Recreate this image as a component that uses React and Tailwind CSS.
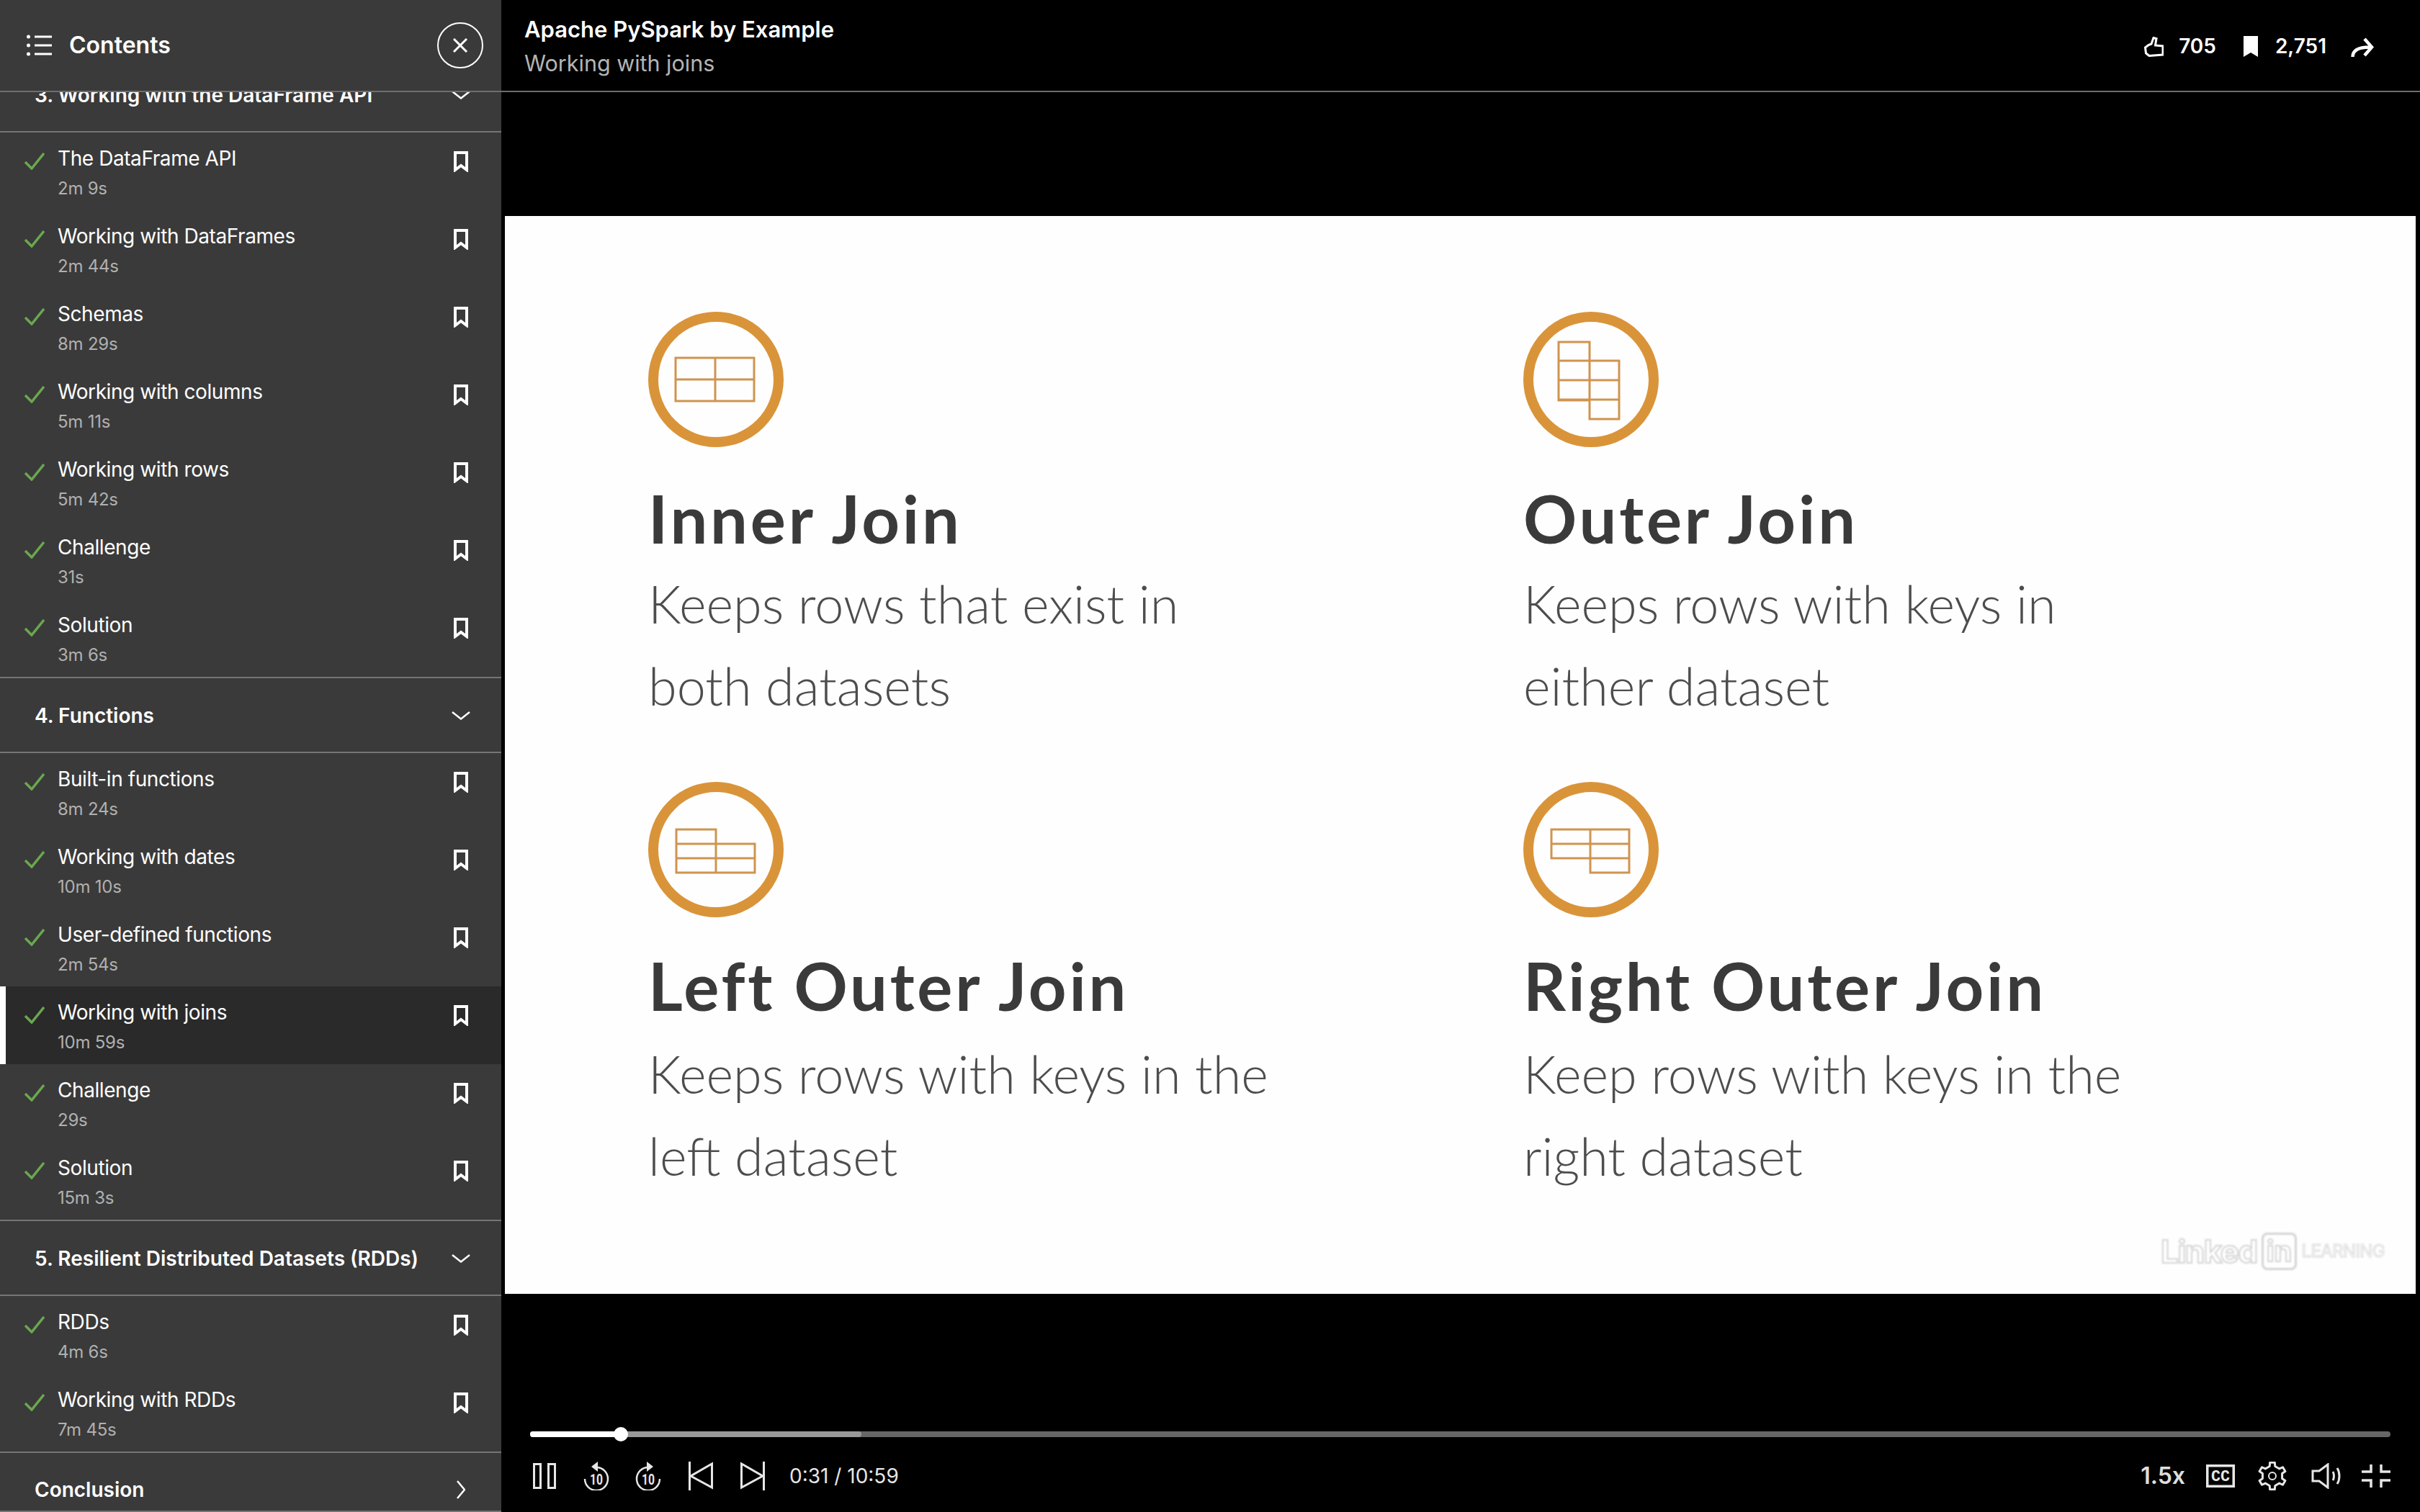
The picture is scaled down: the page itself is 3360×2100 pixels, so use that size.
import React from 'react';

const sections = [
  {
    title: '3. Working with the DataFrame API',
    items: [
      ['The DataFrame API', '2m 9s'],
      ['Working with DataFrames', '2m 44s'],
      ['Schemas', '8m 29s'],
      ['Working with columns', '5m 11s'],
      ['Working with rows', '5m 42s'],
      ['Challenge', '31s'],
      ['Solution', '3m 6s'],
    ],
  },
  {
    title: '4. Functions',
    items: [
      ['Built-in functions', '8m 24s'],
      ['Working with dates', '10m 10s'],
      ['User-defined functions', '2m 54s'],
      ['Working with joins', '10m 59s', true],
      ['Challenge', '29s'],
      ['Solution', '15m 3s'],
    ],
  },
  {
    title: '5. Resilient Distributed Datasets (RDDs)',
    items: [
      ['RDDs', '4m 6s'],
      ['Working with RDDs', '7m 45s'],
    ],
  },
];

// table drawings inside the orange circles, in the circle's own 188 box
const tables = {
  inner: 'M38 64H147V124H38ZM93 64V124M38 94H147',
  outer: 'M49 42H92V123H49ZM49 68H133V149H92V68M49 95H133M49 122H133',
  left: 'M39 66H94V126H39ZM94 86H148V126H94M39 86H94M39 106H148',
  right: 'M39 66H147V126H93V106H39ZM93 66V106M39 86H147M93 106H147',
};

const joins = [
  { name: 'Inner Join', lines: ['Keeps rows that exist in', 'both datasets'], table: 'inner', gap: 'mt-[44px]', descGap: 'mt-[6px]' },
  { name: 'Outer Join', lines: ['Keeps rows with keys in', 'either dataset'], table: 'outer', gap: 'mt-[44px]', descGap: 'mt-[6px]' },
  { name: 'Left Outer Join', lines: ['Keeps rows with keys in the', 'left dataset'], table: 'left', gap: 'mt-[40px]', descGap: 'mt-[10px]' },
  { name: 'Right Outer Join', lines: ['Keep rows with keys in the', 'right dataset'], table: 'right', gap: 'mt-[40px]', descGap: 'mt-[10px]' },
];

function gearPath(cx, cy, outer, inner, teeth) {
  const step = (Math.PI * 2) / teeth;
  const pts = [];
  for (let i = 0; i < teeth; i++) {
    const a = i * step - Math.PI / 2;
    const w = step * 0.17;
    pts.push([a - w * 1.55, inner], [a - w, outer], [a + w, outer], [a + w * 1.55, inner]);
  }
  return (
    pts
      .map(([a, r], i) => `${i ? 'L' : 'M'}${(cx + r * Math.cos(a)).toFixed(2)} ${(cy + r * Math.sin(a)).toFixed(2)}`)
      .join('') + 'Z'
  );
}

function Check() {
  return (
    <svg width="28" height="24" viewBox="0 0 28 24" fill="none" className="mt-[28px] ml-[34px] shrink-0">
      <path d="M1 13L10 22L27 1" stroke="#6aa84f" strokeWidth="3.500" />
    </svg>
  );
}

function Bookmark() {
  return (
    <svg width="20" height="29" viewBox="0 0 20 29" fill="none" className="mt-[26px] mr-[46px] shrink-0">
      <path d="M2 2H18V26L10 20L2 26Z" stroke="white" strokeWidth="4" />
    </svg>
  );
}

function Lesson({ title, time, active }) {
  return (
    <div className={`relative flex h-[108px] ${active ? 'bg-[#2a2a2a]' : ''}`}>
      {active && <div className="absolute left-0 top-0 h-full w-2 bg-white" />}
      <Check />
      <div className="ml-[18px] flex-1 pt-4">
        <div className="text-[28px] leading-10 tracking-[-0.015em] text-white">{title}</div>
        <div className="mt-1.5 text-2xl leading-8 tracking-[-0.01em] text-[#b0b0b0]">{time}</div>
      </div>
      <Bookmark />
    </div>
  );
}

function SectionRow({ title }) {
  return (
    <div className="flex h-[104px] items-center justify-between border-b-2 border-[#757575] pl-[48px] pr-[43px] pt-0.5">
      <span className="text-[28px] font-semibold text-white">{title}</span>
      <svg width="26" height="12" viewBox="0 0 26 12" fill="none">
        <path d="M1 1L13 10.500L25 1" stroke="white" strokeWidth="2.500" />
      </svg>
    </div>
  );
}

function Sidebar() {
  return (
    <div className="flex h-full w-[696px] shrink-0 flex-col overflow-hidden bg-[#3a3a3a]">
      <div className="relative z-10 flex h-[128px] shrink-0 items-center justify-between border-b-2 border-[#6e6e6e] bg-[#3a3a3a] pl-[37px] pr-[25px]">
        <div className="flex items-center gap-6">
          <svg width="35" height="30" viewBox="0 0 35 30" fill="none">
            <path d="M11 3H35M11 15H35M11 27H35" stroke="white" strokeWidth="3" />
            <circle cx="2.500" cy="3" r="2.500" fill="white" />
            <circle cx="2.500" cy="15" r="2.500" fill="white" />
            <circle cx="2.500" cy="27" r="2.500" fill="white" />
          </svg>
          <span className="text-[32px] font-semibold text-white">Contents</span>
        </div>
        <div className="flex h-[64px] w-[64px] items-center justify-center rounded-full border-2 border-white">
          <svg width="20" height="20" viewBox="0 0 20 20" fill="none">
            <path d="M1 1L19 19M19 1L1 19" stroke="white" strokeWidth="3" />
          </svg>
        </div>
      </div>
      {/* list is scrolled, section 3 sits partly under the header */}
      <div className="mt-[-48px]">
        {sections.map((s) => (
          <div key={s.title}>
            <SectionRow title={s.title} />
            {s.items.map(([t, d, active]) => (
              <Lesson key={t} title={t} time={d} active={active} />
            ))}
            <div className="h-0.5 bg-[#757575]" />
          </div>
        ))}
        <div className="flex h-[82px] items-center justify-between border-b-2 border-[#757575] pl-[48px] pr-[50px] pt-[22px]">
          <span className="text-[28px] font-semibold text-white">Conclusion</span>
          <svg width="12" height="26" viewBox="0 0 12 26" fill="none">
            <path d="M1 1L11 13L1 25" stroke="white" strokeWidth="2.500" />
          </svg>
        </div>
      </div>
    </div>
  );
}

function TopBar() {
  return (
    <div className="flex h-[128px] shrink-0 items-start justify-between border-b-2 border-[#6e6e6e] pl-8 pr-[64px]">
      <div className="pt-[21px]">
        <div className="text-[31px] font-semibold leading-10 text-white">Apache PySpark by Example</div>
        <div className="mt-[7px] text-[30.500px] leading-10 text-[#b4b4b4]">Working with joins</div>
      </div>
      <div className="flex items-center pt-[50px] text-[28px] font-semibold leading-[29px] text-white">
        <svg width="27" height="28" viewBox="0 0 27 28" fill="none">
          <path d="M10 10L13 1.500L17 2.500L15.500 12L26 13V25L7 26.500L2.500 23L1.500 15L6 11.500Z" stroke="white" strokeWidth="3" />
        </svg>
        <span className="ml-[21px]">705</span>
        <svg width="20" height="29" viewBox="0 0 20 29" className="ml-[38px]">
          <path d="M0 0H20V29L10 23L0 29Z" fill="white" />
        </svg>
        <span className="ml-6">2,751</span>
        <svg width="32" height="28" viewBox="0 0 32 28" fill="none" className="ml-[34px]">
          <path d="M2.500 28C2.500 19 10 14.500 26 14.500M19 3L29 14.500L19 26" stroke="white" strokeWidth="4.500" />
        </svg>
      </div>
    </div>
  );
}

function JoinCard({ join }) {
  return (
    <div>
      <svg width="188" height="188" viewBox="0 0 188 188" fill="none" className="blur-[0.6px]">
        <circle cx="94" cy="94" r="87" stroke="#d9943a" strokeWidth="14" />
        <path d={tables[join.table]} stroke="#cf9450" strokeWidth="3" />
      </svg>
      <div className={`${join.gap} text-[92px] font-bold leading-[110px] tracking-[3.800px] text-[#3a3a3a] blur-[0.7px]`}>{join.name}</div>
      <div className={`${join.descGap} text-[72px] font-light leading-[114px] text-[#4d4d4d] blur-[0.7px]`}>
        {join.lines.map((l) => (
          <div key={l}>{l}</div>
        ))}
      </div>
    </div>
  );
}

function Slide() {
  return (
    <div className="relative ml-[5px] mt-[172px] h-[1497px] w-[2653px] bg-[#fefefe] font-[Lato,sans-serif]">
      <div className="grid grid-cols-[1215px_1fr] grid-rows-[653px_auto] pl-[199px] pt-[133px]">
        {joins.map((j) => (
          <JoinCard key={j.name} join={j} />
        ))}
      </div>
      {/* watermark */}
      <div className="absolute left-[2299px] top-[1412px] flex items-center font-bold text-white blur-[1px] font-[Inter,sans-serif] [-webkit-text-stroke:2px_#d4d4d4]">
        <span className="text-[44px] leading-[50px] tracking-[-1.500px]">Linked</span>
        <span className="ml-1.5 rounded-lg border-[3px] border-[#d4d4d4] px-1 text-[40px] leading-[46px]">in</span>
        <span className="ml-1.5 text-2xl font-normal tracking-tight [-webkit-text-stroke:1px_#d4d4d4]">LEARNING</span>
      </div>
    </div>
  );
}

function Replay({ flip }) {
  return (
    <svg width="36" height="40" viewBox="0 0 36 40" fill="none">
      <g transform={flip ? 'translate(36 0) scale(-1 1)' : undefined}>
        <path d="M2 24A16 16 0 1 0 18 8H16" stroke="#e6e6e6" strokeWidth="2.500" />
        <path d="M20 0L11 7L20 14Z" fill="#e6e6e6" />
      </g>
      <text x="18" y="32" textAnchor="middle" fontSize="21" fontWeight="700" fill="#e6e6e6" fontFamily="Roboto, sans-serif" textLength="18" lengthAdjust="spacingAndGlyphs">
        10
      </text>
    </svg>
  );
}

function Controls() {
  return (
    <div className="pl-[40px] pr-[41px] pt-[191px]">
      <div className="relative h-2 rounded-full bg-[#666666]">
        <div className="absolute left-0 top-0 h-2 w-[460px] rounded-full bg-[#999999]" />
        <div className="absolute left-0 top-0 h-2 w-[126px] rounded-full bg-white" />
        <div className="absolute left-[116px] top-[-6px] h-5 w-5 rounded-full bg-white" />
      </div>
      <div className="mt-[32px] flex h-[44px] items-center justify-between text-[#e6e6e6]">
        <div className="flex items-center pl-1">
          <svg width="32" height="36" viewBox="0 0 32 36" fill="none">
            <path d="M1.500 1.500H10.500V34.500H1.500ZM21.500 1.500H30.500V34.500H21.500Z" stroke="#e6e6e6" strokeWidth="3" />
          </svg>
          <div className="ml-[38px]">
            <Replay />
          </div>
          <div className="ml-[36px]">
            <Replay flip />
          </div>
          <svg width="34" height="40" viewBox="0 0 34 40" fill="none" className="ml-[38px]">
            <path d="M1.500 0V40M32.500 3V36L3 20Z" stroke="#e6e6e6" strokeWidth="3" />
          </svg>
          <svg width="34" height="40" viewBox="0 0 34 40" fill="none" className="ml-[38px]">
            <path d="M32.500 0V40M1.500 3V36L31 20Z" stroke="#e6e6e6" strokeWidth="3" />
          </svg>
          <span className="ml-[34px] text-[28px] leading-10">0:31 / 10:59</span>
        </div>
        <div className="flex items-center">
          <span className="text-[32px] font-semibold leading-10 text-[#dddddd]">1.5x</span>
          <svg width="40" height="32" viewBox="0 0 40 32" fill="none" className="ml-[29px]">
            <rect x="1.750" y="1.750" width="36.500" height="28.500" stroke="#e6e6e6" strokeWidth="3.500" />
            <text x="20" y="23" textAnchor="middle" fontSize="22" fontWeight="700" fill="#e6e6e6" fontFamily="Liberation Mono, monospace" textLength="26" lengthAdjust="spacingAndGlyphs">
              CC
            </text>
          </svg>
          <svg width="40" height="40" viewBox="0 0 40 40" fill="none" className="ml-8">
            <path d={gearPath(20, 20, 19, 14, 6)} stroke="#e6e6e6" strokeWidth="3" strokeLinejoin="round" />
            <circle cx="20" cy="20" r="5" stroke="#e6e6e6" strokeWidth="2" />
          </svg>
          <svg width="42" height="36" viewBox="0 0 42 36" fill="none" className="ml-[34px]">
            <path d="M2 11H11L23 2V34L11 25H2Z" stroke="#e6e6e6" strokeWidth="3" />
            <path d="M30 12C32 15 32 21 30 24M36 7C40 13 40 23 36 29" stroke="#e6e6e6" strokeWidth="3" />
          </svg>
          <svg width="40" height="32" viewBox="0 0 40 32" fill="none" className="ml-7">
            <path d="M0 10H13V0M27 0V10H40M0 22H13V32M27 32V22H40" stroke="#e6e6e6" strokeWidth="3.500" />
          </svg>
        </div>
      </div>
    </div>
  );
}

export default function App() {
  return (
    <div className="flex h-[2100px] w-[3360px] overflow-hidden bg-black font-[Inter,sans-serif]">
      <Sidebar />
      <div className="flex flex-1 flex-col">
        <TopBar />
        <Slide />
        <Controls />
      </div>
    </div>
  );
}
